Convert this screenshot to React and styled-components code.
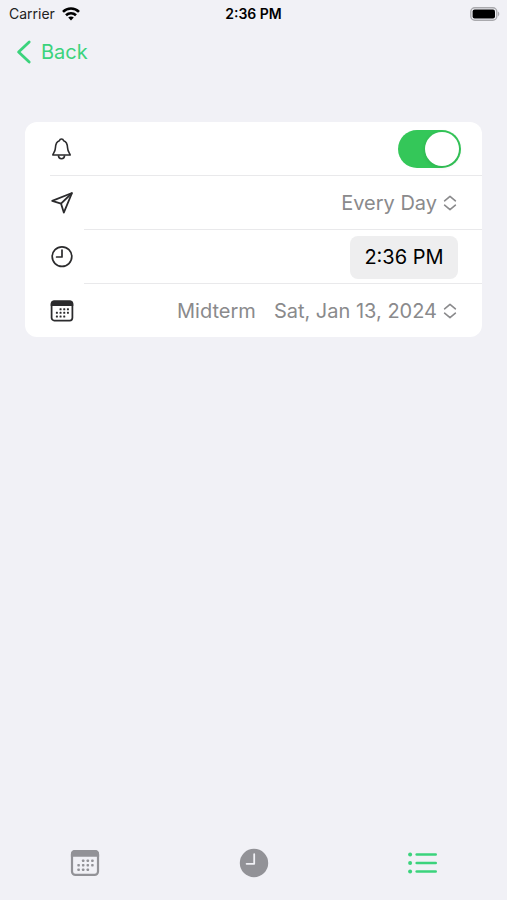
import { useState } from "react";
import styled, { createGlobalStyle } from "styled-components";

const GlobalStyle = createGlobalStyle`
    body {
        margin: 0;
        background-color: #f1f1f6;
    }

    * {
        box-sizing: border-box;
    }

    button, select, input {
        margin: 0;
        padding: 0;
        border: none;
        background: none;
        font: inherit;
        color: inherit;
    }

    svg {
        display: block;
        flex: none;
    }
`

const Screen = styled.div`
    display: flex;
    flex-direction: column;
    min-height: 100vh;
    background-color: #f1f1f6;
    color: #000;
    font-family: Inter, "Liberation Sans", sans-serif;
    font-size: 20px;
    line-height: 24px;
`

const StatusBar = styled.header`
    display: grid;
    grid-template-columns: 1fr auto 1fr;
    align-items: center;
    height: 28px;
    padding: 0 7px;
    font-size: 14px;
    line-height: 16px;
`

const Carrier = styled.div`
    display: flex;
    align-items: center;
    gap: 7px;
    padding-left: 2px;
    color: #222;
`

const StatusTime = styled.div`
    font-weight: 600;
`

const Battery = styled.div`
    justify-self: end;
`

const NavBar = styled.nav`
    display: flex;
    align-items: center;
    height: 48px;
    padding: 0 16px;
`

const BackLink = styled.a`
    display: flex;
    align-items: center;
    gap: 9px;
    color: #3bd37c;
    text-decoration: none;
`

const Content = styled.main`
    flex: 1;
    padding: 46px 25px 0;
`

const Card = styled.section`
    border-radius: 12px;
    background-color: #fff;
    overflow: hidden;
`

const RowBase = styled.div`
    display: flex;
    align-items: center;
    height: 54px;
    padding-left: 25px;

    &:last-child {
        height: 53px;
    }
`

const RowBody = styled.div`
    display: flex;
    flex: 1;
    align-items: center;
    justify-content: flex-end;
    padding-right: ${props => props.$inset}px;
`

const Divider = styled.hr`
    height: 1px;
    margin: -1px 0 0 ${props => props.$start}px;
    border: none;
    background-color: #e9e9eb;
`

const Switch = styled.input`
    display: flex;
    align-items: center;
    width: 63px;
    height: 38px;
    padding: 2px;
    border-radius: 19px;
    appearance: none;
    background-color: #e9e9eb;
    cursor: pointer;

    &::before {
        content: "";
        width: 34px;
        height: 34px;
        border-radius: 50%;
        background-color: #fff;
        box-shadow: 0 1px 4px rgba(0,0,0,0.12);
    }

    &:checked {
        justify-content: flex-end;
        background-color: #34c759;
    }
`

const PickerWrap = styled.label`
    display: flex;
    align-items: center;
    gap: 6px;
    color: #8a8a8c;
`

const PickerTitle = styled.span`
    margin-right: 12px;
`

const PickerSelect = styled.select`
    appearance: none;
    field-sizing: content;
    text-align: right;
    line-height: 24px;
    cursor: pointer;
`

const TimeButton = styled.button`
    width: 108px;
    height: 43px;
    border-radius: 8px;
    background-color: #eeeeef;
    cursor: pointer;
`

const TabBar = styled.nav`
    display: grid;
    grid-template-columns: repeat(3, 1fr);
    height: 74px;
`

const TabButton = styled.button`
    display: flex;
    align-items: center;
    justify-content: center;
    color: ${props => props.$active ? '#3bd37c' : '#929297'};
    cursor: pointer;
`

const WifiIcon = () => (
    <svg width="18" height="14" viewBox="0 0 18 14" fill="none" stroke="#000" strokeWidth="2.6">
        <path d="M1 4.8C5.4 0.4 12.6 0.4 17 4.8" />
        <path d="M4 8.2C6.8 5.5 11.2 5.5 14 8.2" />
        <path d="M9 13.4L6.2 10.5C7.8 9.1 10.2 9.1 11.8 10.5Z" fill="#000" stroke="none" />
    </svg>
)

const BatteryIcon = () => (
    <svg width="30" height="14" viewBox="0 0 30 14">
        <rect x="0.8" y="0.8" width="26" height="12.4" rx="4" fill="#f1f1f6" stroke="#a9a9ad" strokeWidth="1.4" />
        <rect x="2.6" y="2.6" width="22.4" height="8.8" rx="2" fill="#000" />
        <path d="M28 4.6C29.8 5.4 29.8 8.6 28 9.4Z" fill="#a9a9ad" />
    </svg>
)

const BackIcon = () => (
    <svg width="16" height="24" viewBox="0 0 16 24" fill="none" stroke="currentColor" strokeWidth="2.8" strokeLinecap="round" strokeLinejoin="round">
        <path d="M13.2 2L2.6 12L13.2 22" />
    </svg>
)

const BellIcon = () => (
    <svg width="24" height="24" viewBox="0 0 24 24" fill="none" stroke="#2b2b2d" strokeWidth="1.6" strokeLinejoin="round">
        <path d="M2.8 18C3 16.2 5.2 15.4 5.4 11C5.6 6.8 6.9 4.4 9.4 3.7C10 1.5 13 1.5 13.6 3.7C16.1 4.4 17.4 6.8 17.6 11C17.8 15.4 20 16.2 20.2 18Z" />
        <path d="M8.4 18.4C8.6 22.8 14.4 22.8 14.6 18.4" />
    </svg>
)

const PlaneIcon = () => (
    <svg width="24" height="24" viewBox="0 0 24 24" fill="none" stroke="#2b2b2d" strokeWidth="1.8" strokeLinejoin="round">
        <path d="M22 2L2.2 9.9L11 12.6L13.8 21.6Z" />
        <path d="M22 2L11 12.6" />
    </svg>
)

const ClockIcon = () => (
    <svg width="24" height="24" viewBox="0 0 24 24" fill="none" stroke="#2b2b2d" strokeWidth="1.7" strokeLinecap="round" strokeLinejoin="round">
        <circle cx="12" cy="11.6" r="9.8" />
        <path d="M12 5V12H6.6" />
    </svg>
)

const ClockFilledIcon = () => (
    <svg width="30" height="30" viewBox="0 0 30 30" fill="none">
        <circle cx="15" cy="15" r="14.2" fill="currentColor" />
        <path d="M15.2 6.2V15.8H7.6" stroke="#f1f1f6" strokeWidth="1.8" strokeLinecap="round" strokeLinejoin="round" />
    </svg>
)

const calendarDots = [
    [13.2, 12.8], [17.8, 12.8], [22.4, 12.8],
    [8.6, 17.3], [13.2, 17.3], [17.8, 17.3], [22.4, 17.3],
    [8.6, 21.8], [13.2, 21.8], [17.8, 21.8],
]

const CalendarIcon = ({ size, color }) => (
    <svg width={size} height={size} viewBox="0 0 30 30" fill="none">
        <rect x="2" y="3.1" width="26" height="23.8" rx="3.4" stroke={color} strokeWidth="2.2" />
        <path d="M0.9 8.8V6C0.9 3.6 2.5 2 4.9 2H25.1C27.5 2 29.1 3.6 29.1 6V8.8Z" fill={color} />
        {calendarDots.map(([x, y]) => (
            <rect key={`${x}-${y}`} x={x - 1.25} y={y - 1.25} width="2.5" height="2.5" rx="0.7" fill={color} />
        ))}
    </svg>
)

const ListIcon = () => (
    <svg width="30" height="24" viewBox="0 0 30 24" fill="currentColor">
        {[3.5, 12, 20.5].map(y => (
            <g key={y}>
                <circle cx="2.1" cy={y} r="2" />
                <rect x="7.4" y={y - 1.3} width="21.6" height="2.6" rx="1.3" />
            </g>
        ))}
    </svg>
)

const UpDownIcon = () => (
    <svg width="14" height="16" viewBox="0 0 14 16" fill="none" stroke="currentColor" strokeWidth="1.6" strokeLinecap="round" strokeLinejoin="round">
        <path d="M1.6 5.8L7 1.4L12.4 5.8" />
        <path d="M1.6 10.2L7 14.6L12.4 10.2" />
    </svg>
)

const Row = ({ icon, inset, children }) => (
    <RowBase>
        {icon}
        <RowBody $inset={inset}>{children}</RowBody>
    </RowBase>
)

const Picker = ({ name, title, value, options, onChange }) => (
    <PickerWrap>
        {title && <PickerTitle>{title}</PickerTitle>}
        <PickerSelect aria-label={name} value={value} onChange={e => onChange(e.target.value)}>
            {options.map(option => <option key={option}>{option}</option>)}
        </PickerSelect>
        <UpDownIcon />
    </PickerWrap>
)

export default function App() {
    const [enabled, setEnabled] = useState(true);
    const [repeat, setRepeat] = useState('Every Day');
    const [date, setDate] = useState('Sat, Jan 13, 2024');
    const [tab, setTab] = useState('list');

    return (
        <>
            <GlobalStyle />
            <Screen>
                <StatusBar>
                    <Carrier>Carrier <WifiIcon /></Carrier>
                    <StatusTime>2:36 PM</StatusTime>
                    <Battery><BatteryIcon /></Battery>
                </StatusBar>
                <NavBar>
                    <BackLink href="#"><BackIcon />Back</BackLink>
                </NavBar>
                <Content>
                    <Card>
                        <Row icon={<BellIcon />} inset={21}>
                            <Switch
                                type="checkbox"
                                role="switch"
                                aria-label="Notifications"
                                checked={enabled}
                                onChange={e => setEnabled(e.target.checked)}
                            />
                        </Row>
                        <Divider $start={25} />
                        <Row icon={<PlaneIcon />} inset={25}>
                            <Picker
                                name="Repeat"
                                value={repeat}
                                options={['Every Day', 'Weekdays']}
                                onChange={setRepeat}
                            />
                        </Row>
                        <Divider $start={59} />
                        <Row icon={<ClockIcon />} inset={24}>
                            <TimeButton type="button" aria-label="Time 2:36 PM">2:36 PM</TimeButton>
                        </Row>
                        <Divider $start={59} />
                        <Row icon={<CalendarIcon size={24} color="#2b2b2d" />} inset={25}>
                            <Picker
                                name="Midterm date"
                                title="Midterm"
                                value={date}
                                options={['Sat, Jan 13, 2024']}
                                onChange={setDate}
                            />
                        </Row>
                    </Card>
                </Content>
                <TabBar>
                    <TabButton type="button" aria-label="Calendar" $active={tab === 'calendar'} onClick={() => setTab('calendar')}>
                        <CalendarIcon size={30} color="currentColor" />
                    </TabButton>
                    <TabButton type="button" aria-label="Clock" $active={tab === 'clock'} onClick={() => setTab('clock')}>
                        <ClockFilledIcon />
                    </TabButton>
                    <TabButton type="button" aria-label="List" $active={tab === 'list'} onClick={() => setTab('list')}>
                        <ListIcon />
                    </TabButton>
                </TabBar>
            </Screen>
        </>
    )
}
